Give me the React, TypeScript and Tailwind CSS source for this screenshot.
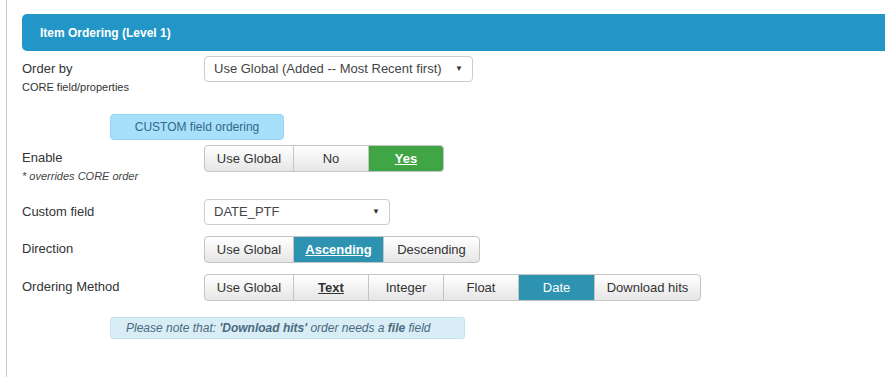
import { ReactNode } from 'react'

const btn =
  'h-full flex items-center justify-center border border-[#c4c4c4] -ml-px first:ml-0 first:rounded-l-[4px] last:rounded-r-[4px] text-[13px]'
const idle = 'bg-gradient-to-b from-white to-[#e6e6e6] text-[#333]'

type Opt = { label: string; w: string; style?: 'green' | 'blue' | 'blueplain' | 'bold' }

function Group({ opts }: { opts: Opt[] }) {
  return (
    <div className="flex h-[27px]">
      {opts.map((o) => {
        let cls = idle
        if (o.style === 'green') cls = 'bg-[#40a544] border-[#3a9a3e] text-white font-bold underline relative z-10'
        if (o.style === 'blue') cls = 'bg-[#2d93b1] border-[#2a88a4] text-white font-bold underline relative z-10'
        if (o.style === 'blueplain') cls = 'bg-[#2d93b1] border-[#2a88a4] text-white relative z-10'
        if (o.style === 'bold') cls = idle + ' font-bold underline'
        return (
          <div key={o.label} className={`${btn} ${cls} ${o.w}`}>
            {o.label}
          </div>
        )
      })}
    </div>
  )
}

function Select({ value, w }: { value: string; w: string }) {
  return (
    <div
      className={`h-[26px] ${w} flex items-center justify-between border border-[#ccc] rounded-[4px] bg-white pl-[9px] pr-[9px] text-[13px] text-[#444]`}
    >
      <span>{value}</span>
      <span className="text-[8px] text-[#333]">▼</span>
    </div>
  )
}

function Row({ label, sub, italicSub, children, className }: { label: string; sub?: string; italicSub?: boolean; children: ReactNode; className?: string }) {
  return (
    <div className={`flex ${className ?? ''}`}>
      <div className="w-[182px] shrink-0 pt-[4px]">
        <div className="text-[13px] leading-[18px] text-[#333]">{label}</div>
        {sub && (
          <div
            className={
              italicSub
                ? 'mt-[3px] text-[11px] leading-[13px] italic text-[#444]'
                : 'mt-[2px] text-[11px] leading-[14px] text-[#333]'
            }
          >
            {sub}
          </div>
        )}
      </div>
      <div>{children}</div>
    </div>
  )
}

export default function App() {
  return (
    <div className="w-[885px] h-[377px] overflow-hidden bg-white pl-[6px]" style={{ fontFamily: '"Liberation Sans", Arial, sans-serif' }}>
      <div className="h-full border-l border-[#c8c8c8] pl-[15px] pt-[14px]">
        <div className="h-[37px] bg-[#2296c7] rounded-l-[5px] flex items-center pl-[18px] text-white text-[12px] font-bold">
          Item Ordering (Level 1)
        </div>

        <Row label="Order by" sub="CORE field/properties" className="mt-[5px]">
          <Select value="Use Global (Added -- Most Recent first)" w="w-[269px]" />
        </Row>

        <div className="mt-[20px] ml-[88px] w-[174px] h-[26px] flex items-center justify-center rounded-[4px] bg-[#a6e0fb] border border-[#92d5f6] text-[12px] text-[#35678a]">
          CUSTOM field ordering
        </div>

        <Row label="Enable" sub="* overrides CORE order" italicSub className="mt-[5px]">
          <Group
            opts={[
              { label: 'Use Global', w: 'w-[90px]' },
              { label: 'No', w: 'w-[76px]' },
              { label: 'Yes', w: 'w-[76px]', style: 'green' },
            ]}
          />
        </Row>

        <Row label="Custom field" className="mt-[16px]">
          <Select value="DATE_PTF" w="w-[186px]" />
        </Row>

        <Row label="Direction" className="mt-[11px]">
          <Group
            opts={[
              { label: 'Use Global', w: 'w-[90px]' },
              { label: 'Ascending', w: 'w-[91px]', style: 'blue' },
              { label: 'Descending', w: 'w-[97px]' },
            ]}
          />
        </Row>

        <Row label="Ordering Method" className="mt-[11px]">
          <Group
            opts={[
              { label: 'Use Global', w: 'w-[90px]' },
              { label: 'Text', w: 'w-[76px]', style: 'bold' },
              { label: 'Integer', w: 'w-[76px]' },
              { label: 'Float', w: 'w-[76px]' },
              { label: 'Date', w: 'w-[77px]', style: 'blueplain' },
              { label: 'Download hits', w: 'w-[107px]' },
            ]}
          />
        </Row>

        <div className="mt-[16px] ml-[88px] w-[355px] h-[22px] flex items-center pl-[15px] rounded-[3px] bg-[#d9edf7] border border-[#c4e3f0] text-[12px] italic text-[#4a6a7e]">
          <span>
            Please note that: <b>'Download hits'</b> order needs a <b>file</b> field
          </span>
        </div>
      </div>
    </div>
  )
}
